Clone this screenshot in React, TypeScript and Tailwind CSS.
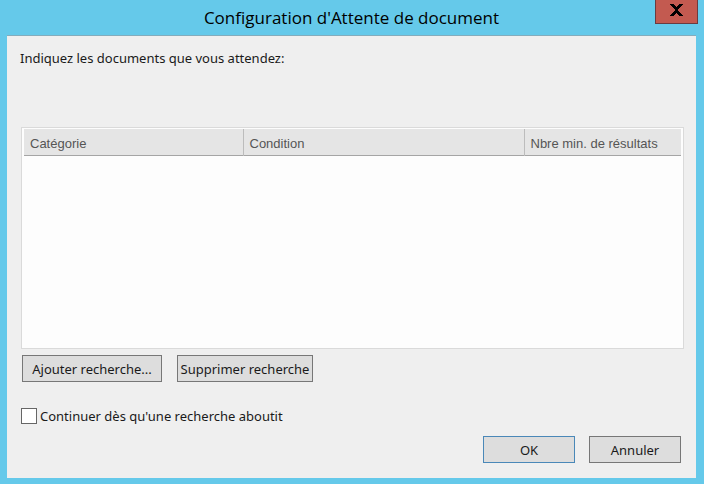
import { useState } from 'react';

interface Column {
    id: string;
    label: string;
    className: string;
}

const columns: Column[] = [
    { id: 'category', label: 'Catégorie', className: 'w-[219px]' },
    { id: 'condition', label: 'Condition', className: '' },
    { id: 'min-results', label: 'Nbre min. de résultats', className: 'w-[157px]' },
];

function CloseIcon() {
    return (
        <svg className="w-[13px] h-3" viewBox="0 0 13 12" fill="#000" shapeRendering="crispEdges" aria-hidden="true">
            <path d="M0 0h4v1h1v1h1v1h1v-1h1v-1h1v-1h4v1h-1v1h-1v1h-1v1h-1v1h-1v2h1v1h1v1h1v1h1v1h1v1h-4v-1h-1v-1h-1v-1h-1v1h-1v1h-1v1h-4v-1h1v-1h1v-1h1v-1h1v-1h1v-2h-1v-1h-1v-1h-1v-1h-1v-1h-1z" />
        </svg>
    );
}

export default function App() {
    const [stopOnMatch, setStopOnMatch] = useState(false);

    return (
        <div className="min-h-screen flex flex-col bg-[#65c9ea] pl-[7px] pr-2 pb-[6px] text-[#1a1a1a] text-[13px] leading-5 font-['Noto_Sans',sans-serif]">
            {/* Title bar */}
            <header className="h-[35px] grid grid-cols-[1fr_auto_1fr] items-start">
                <h1 className="col-start-2 pt-1 text-[17px] leading-7 text-black font-['Open_Sans',sans-serif]">
                    Configuration d'Attente de document
                </h1>
                <button
                    type="button"
                    aria-label="Fermer"
                    className="justify-self-end -mr-0.5 w-[43px] h-6 flex items-center justify-center pb-1 bg-[#c35a50] border border-t-0 border-[#6b3b40]"
                >
                    <CloseIcon />
                </button>
            </header>

            <main className="flex-1 flex flex-col bg-[#efefef] border-t border-[#84acbc] pl-[14px] pr-3 pt-3 pb-[15px]">
                <p className="-ml-px">Indiquez les documents que vous attendez:</p>

                {/* List of expected documents */}
                <div className="flex-1 mt-[59px] bg-[#fdfdfd] border border-[#dadada] p-0.5 pt-px">
                    <table className="w-full table-fixed border-collapse">
                        <thead>
                            <tr className="h-[26px] bg-[#e5e5e5] border-b border-[#a5a5a5]">
                                {columns.map((column) => (
                                    <th
                                        key={column.id}
                                        scope="col"
                                        className={`pl-1.5 pt-1 text-left font-normal text-[#555] border-r border-[#bcbcbc] last:border-r-0 whitespace-nowrap font-['Liberation_Sans',sans-serif] ${column.className}`}
                                    >
                                        {column.label}
                                    </th>
                                ))}
                            </tr>
                        </thead>
                        <tbody />
                    </table>
                </div>

                <div className="mt-1.5 ml-px flex gap-[15px]">
                    <button type="button" className="w-[140px] h-[27px] whitespace-nowrap bg-[#dddddd] border border-[#777]">
                        Ajouter recherche...
                    </button>
                    <button type="button" className="w-[136px] h-[27px] whitespace-nowrap bg-[#dddddd] border border-[#777]">
                        Supprimer recherche
                    </button>
                </div>

                <label className="mt-6 self-start flex items-center gap-[3px]">
                    <input
                        type="checkbox"
                        checked={stopOnMatch}
                        onChange={(e) => setStopOnMatch(e.target.checked)}
                        className="appearance-none w-4 h-4 bg-white border border-[#666] checked:bg-[#3c7fb1]"
                    />
                    Continuer dès qu'une recherche aboutit
                </label>

                {/* Dialog actions */}
                <div className="mt-2.5 mr-[3px] flex justify-end gap-[14px]">
                    <button type="submit" className="w-[92px] h-[27px] bg-[#dddddd] border border-[#4a88b8]">
                        OK
                    </button>
                    <button type="button" className="w-[92px] h-[27px] bg-[#dddddd] border border-[#777]">
                        Annuler
                    </button>
                </div>
            </main>
        </div>
    );
}
